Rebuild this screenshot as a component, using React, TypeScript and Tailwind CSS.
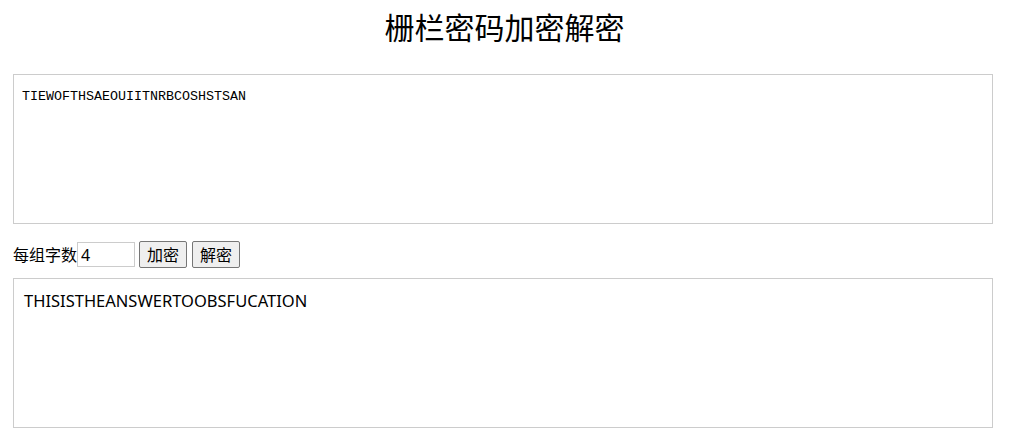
export default function App() {
  return (
    <div className="min-h-[440px] bg-white px-[13px] pt-[6px] text-black [font-family:'Noto_Sans','Noto_Sans_CJK_SC',sans-serif]">
      <h1 className="text-center text-[30px] leading-[44px] font-normal">栅栏密码加密解密</h1>
      <textarea
        className="mt-[24px] block h-[150px] w-[980px] resize-none border border-[#cccccc] px-[8px] py-[14px] text-[13.33px] leading-[16px] [font-family:'Liberation_Mono','Noto_Sans_CJK_SC',monospace] outline-none"
        defaultValue="TIEWOFTHSAEOUIITNRBCOSHSTSAN"
      />
      <div className="mt-[17px] flex items-center text-[16px]">
        <span className="leading-[20px]">每组字数</span>
        <input
          className="h-[25px] w-[58px] border border-[#cccccc] px-[3px] text-[16px] leading-[20px] outline-none"
          defaultValue="4"
        />
        <button className="ml-[4px] h-[27px] w-[48px] rounded-[2px] border border-[#767676] bg-[#efefef] text-[16px] leading-[20px]">
          加密
        </button>
        <button className="ml-[5px] h-[27px] w-[48px] rounded-[2px] border border-[#767676] bg-[#efefef] text-[16px] leading-[20px]">
          解密
        </button>
      </div>
      <textarea
        className="mt-[10px] block h-[150px] w-[980px] resize-none border border-[#cccccc] px-[10px] py-[12px] text-[16.5px] leading-[20px] outline-none"
        defaultValue="THISISTHEANSWERTOOBSFUCATION"
      />
    </div>
  )
}
